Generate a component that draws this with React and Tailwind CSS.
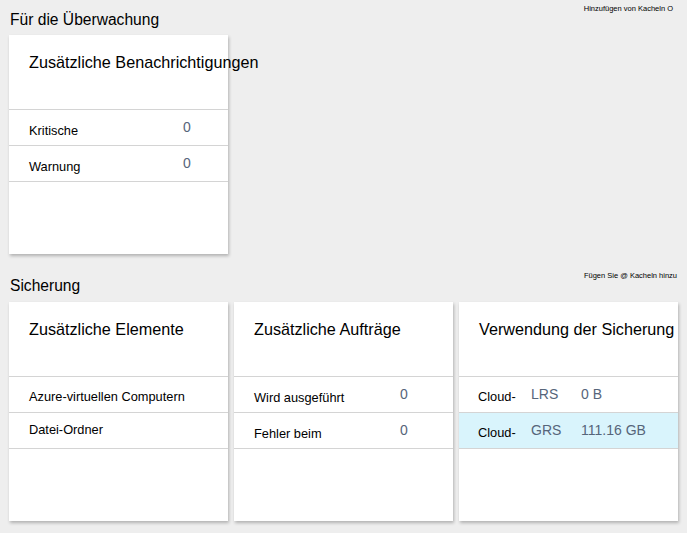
const font = { fontFamily: '"Liberation Sans", Arial, sans-serif' };

const Row = ({ children, highlight }) => (
  <div className={`flex items-center h-[36px] border-b border-[#d4d4d4] ${highlight ? 'bg-[#d9f4fc]' : ''}`}>
    {children}
  </div>
);

const Card = ({ title, children }) => (
  <div className="w-[219px] h-[219px] bg-white shadow-[1px_2px_3px_rgba(0,0,0,0.25)] flex flex-col">
    <div className="h-[75px] border-b border-[#d4d4d4] pl-5 pt-[15px]">
      <div className="text-[16.2px] leading-[24px] text-black whitespace-nowrap">{title}</div>
    </div>
    {children}
  </div>
);

const CountRow = ({ label, value, valueX }) => (
  <Row>
    <span className="text-[12.8px] text-black pl-5 pt-[6px] shrink-0" style={{ width: valueX }}>{label}</span>
    <span className="text-[14px] text-[#56657a] -mt-[1px]">{value}</span>
  </Row>
);

const UsageRow = ({ kind, value, highlight }) => (
  <Row highlight={highlight}>
    <span className="text-[12.8px] text-black pl-[19px] w-[72px] pt-[4px] shrink-0">Cloud-</span>
    <span className="text-[14px] text-[#56657a] w-[50px] shrink-0">{kind}</span>
    <span className="text-[14px] text-[#56657a]">{value}</span>
  </Row>
);

export default function App() {
  return (
    <div className="w-[687px] h-[533px] bg-[#eeeeee] overflow-hidden pl-[9px]" style={font}>
      <div className="h-[35px] flex justify-between pr-[14px]">
        <div className="text-[15.6px] leading-[20px] pt-[10px] pl-[1px] text-black">Für die Überwachung</div>
        <div className="text-[7.5px] leading-[10px] pt-[4px] text-black">Hinzufügen von Kacheln O</div>
      </div>
      <Card title="Zusätzliche Benachrichtigungen">
        <CountRow label="Kritische" value="0" valueX={174} />
        <CountRow label="Warnung" value="0" valueX={174} />
      </Card>
      <div className="h-[48px] flex justify-between pr-[10px]">
        <div className="text-[15.6px] leading-[20px] pt-[22px] pl-[1px] text-black">Sicherung</div>
        <div className="text-[7.5px] leading-[10px] pt-[17px] text-black">Fügen Sie @ Kacheln hinzu</div>
      </div>
      <div className="flex gap-[6px]">
        <Card title="Zusätzliche Elemente">
          <Row><span className="text-[12.8px] pl-5 pt-[4px]">Azure-virtuellen Computern</span></Row>
          <Row><span className="text-[12.8px] pl-5 -mt-[1px]">Datei-Ordner</span></Row>
        </Card>
        <Card title="Zusätzliche Aufträge">
          <CountRow label="Wird ausgeführt" value="0" valueX={166} />
          <CountRow label="Fehler beim" value="0" valueX={166} />
        </Card>
        <Card title="Verwendung der Sicherung">
          <UsageRow kind="LRS" value="0 B" />
          <UsageRow kind="GRS" value="111.16 GB" highlight />
        </Card>
      </div>
    </div>
  );
}
